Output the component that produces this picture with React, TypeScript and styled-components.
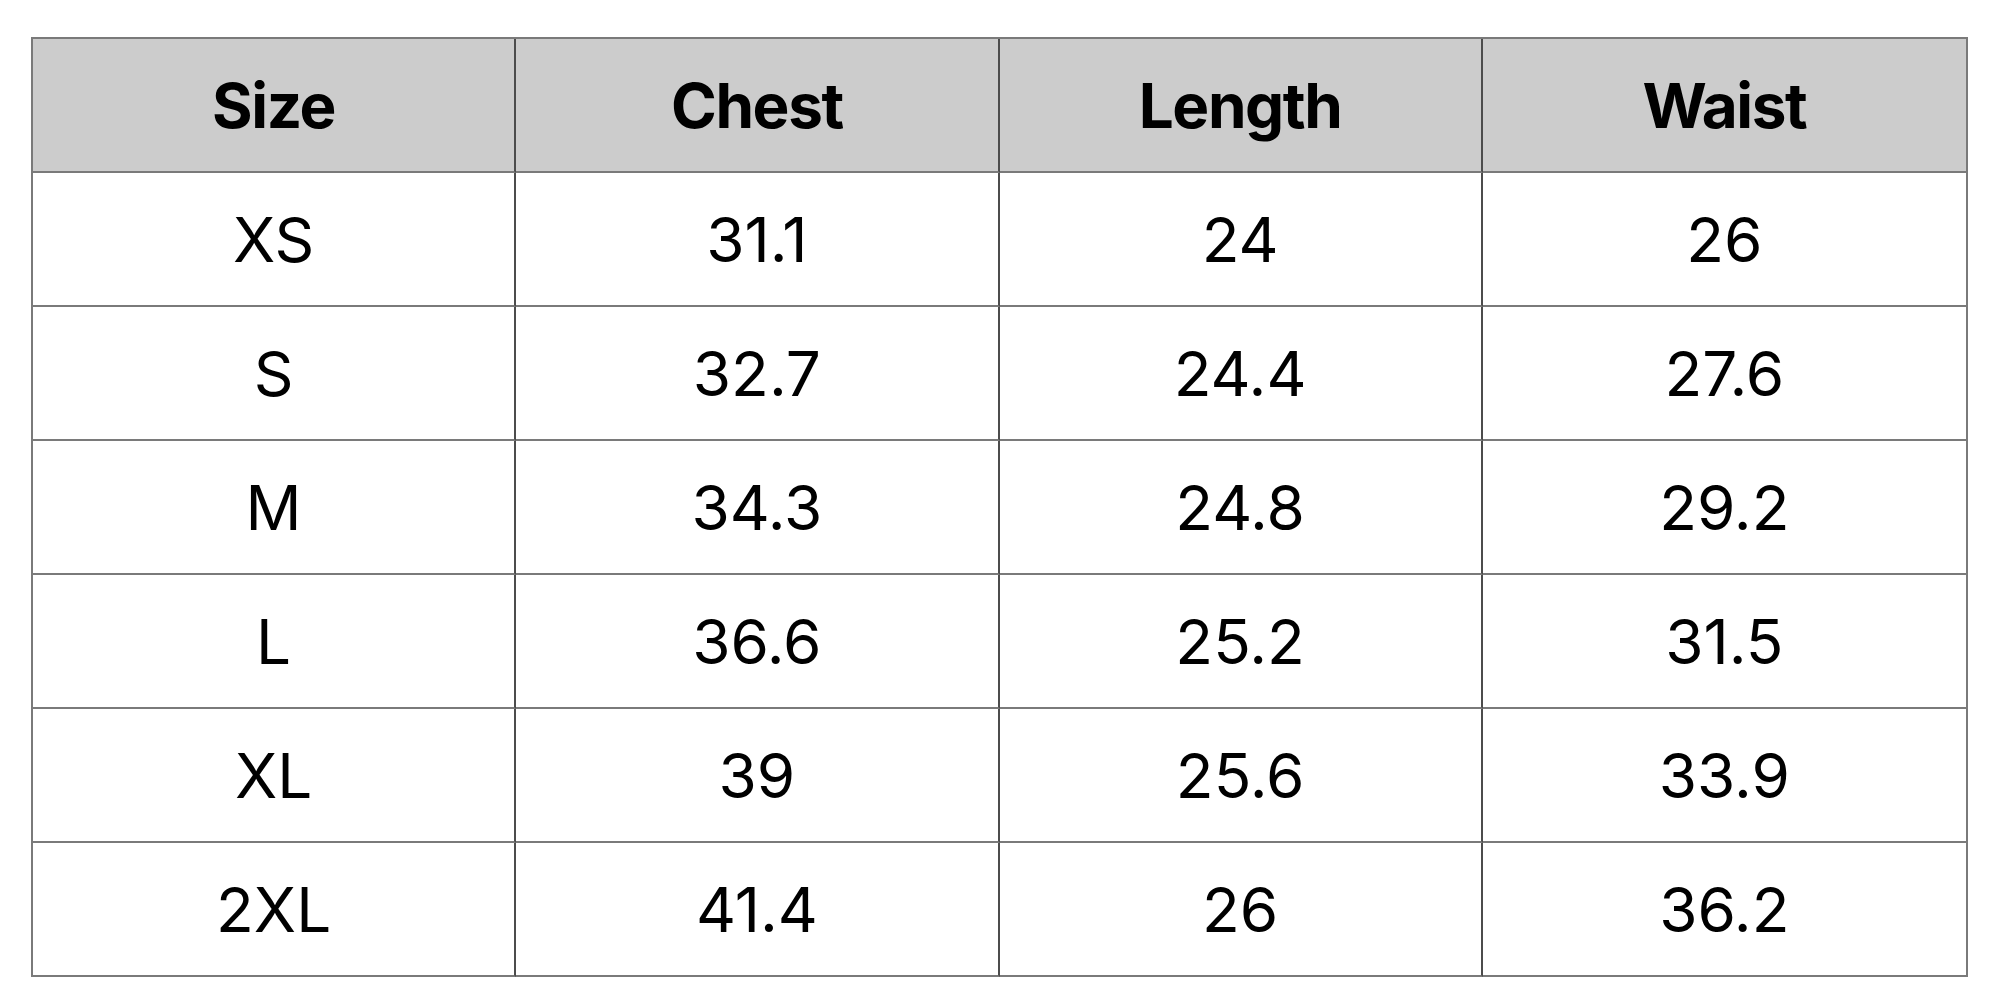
import React from "react";
import styled, { createGlobalStyle } from "styled-components";

const GlobalStyle = createGlobalStyle`
  html, body {
    margin: 0;
    padding: 0;
    background: #ffffff;
  }
  body {
    font-family: Inter, "Noto Sans", "Liberation Sans", sans-serif;
    color: #000000;
  }
`;

const Page = styled.div`
  padding: 37px 0 0 31px;
`;

const Grid = styled.div`
  display: grid;
  grid-template-columns: repeat(4, 483.25px);
  border-top: 2px solid #7a7a7a;
  border-left: 2px solid #7a7a7a;
  border-right: 2px solid #7a7a7a;
  width: max-content;
`;

const Cell = styled.div<{ $header?: boolean; $last?: boolean }>`
  box-sizing: border-box;
  height: 134px;
  display: flex;
  align-items: center;
  justify-content: center;
  background: ${(p) => (p.$header ? "#cccccc" : "#ffffff")};
  border-bottom: 2px solid #7a7a7a;
  border-right: ${(p) => (p.$last ? "none" : "2px solid #4c4c4c")};
  font-size: 62px;
  font-weight: ${(p) => (p.$header ? 700 : 400)};
  letter-spacing: ${(p) => (p.$header ? "-1.4px" : "0px")};
  line-height: 1;
  padding-top: 2px;
`;

const headers = ["Size", "Chest", "Length", "Waist"];
const rows: string[][] = [
  ["XS", "31.1", "24", "26"],
  ["S", "32.7", "24.4", "27.6"],
  ["M", "34.3", "24.8", "29.2"],
  ["L", "36.6", "25.2", "31.5"],
  ["XL", "39", "25.6", "33.9"],
  ["2XL", "41.4", "26", "36.2"],
];

export default function App() {
  return (
    <>
      <GlobalStyle />
      <Page>
        <Grid>
          {headers.map((h, i) => (
            <Cell key={h} $header $last={i === headers.length - 1}>
              {h}
            </Cell>
          ))}
          {rows.map((r) =>
            r.map((v, i) => (
              <Cell key={r[0] + i} $last={i === r.length - 1}>
                {v}
              </Cell>
            ))
          )}
        </Grid>
      </Page>
    </>
  );
}
